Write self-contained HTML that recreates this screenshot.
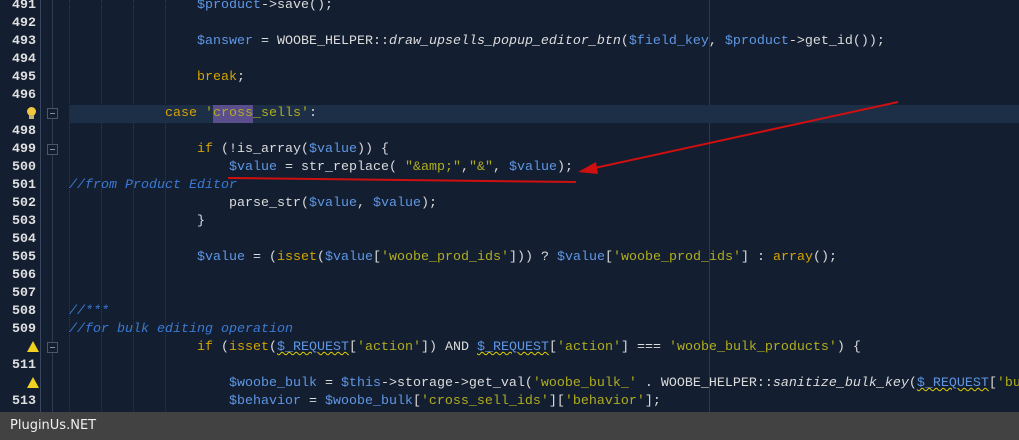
<html><head><style>
body{margin:0;width:1019px;height:440px;background:#131e31;overflow:hidden;position:relative;font-family:"Liberation Mono",monospace;}
.ln{position:absolute;left:0;width:36px;text-align:right;color:#e0e0e0;font-size:13.33px;height:18px;line-height:18px;font-weight:bold}
.cd{position:absolute;left:69px;white-space:pre;color:#dcdcdc;font-size:13.33px;height:18px;line-height:18px;}
.k{color:#d5a400}.v{color:#5f97e4}.s{color:#b0ad1e}.c{color:#3b7ad4;font-style:italic}.i{font-style:italic}
.w{text-decoration:underline wavy #e0d000;text-decoration-thickness:1px}
.g{position:absolute;top:0;height:412px;border-left:1px dotted #2b3a52}
.fb{position:absolute;left:47px;width:9px;height:9px;border:1px solid #4a5670;background:#131e31}
.fb:after{content:"";position:absolute;left:2px;top:4px;width:5px;height:1px;background:#8090a8}
</style></head><body>
<div style="position:absolute;left:40px;top:0;width:1px;height:412px;background:#3a4660"></div>
<div style="position:absolute;left:52px;top:0;width:1px;height:412px;background:#2e3b52"></div>
<div style="position:absolute;left:709px;top:0;width:1px;height:412px;background:#2a3850"></div>
<div class="g" style="left:69px"></div><div class="g" style="left:101px"></div><div class="g" style="left:133px"></div><div class="g" style="left:165px"></div>
<div style="position:absolute;left:69px;top:105px;width:950px;height:18px;background:#1d2f47"></div>
<div style="position:absolute;left:213px;top:105px;width:40px;height:18px;background:#5a4e8c"></div>
<div class="fb" style="top:108px"></div><div class="fb" style="top:144px"></div><div class="fb" style="top:342px"></div>
<div class="ln" style="top:-3px">491</div><div class="cd" style="top:-3px">                <span class="v">$product</span>-&gt;save();</div>
<div class="ln" style="top:15px">492</div>
<div class="ln" style="top:33px">493</div><div class="cd" style="top:33px">                <span class="v">$answer</span> = WOOBE_HELPER::<span class="i">draw_upsells_popup_editor_btn</span>(<span class="v">$field_key</span>, <span class="v">$product</span>-&gt;get_id());</div>
<div class="ln" style="top:51px">494</div>
<div class="ln" style="top:69px">495</div><div class="cd" style="top:69px">                <span class="k">break</span>;</div>
<div class="ln" style="top:87px">496</div>
<div style="position:absolute;left:27px;top:107px;width:9px;height:9px;border-radius:50%;background:#f0c840"></div><div style="position:absolute;left:29px;top:115px;width:5px;height:4px;background:#c8b070"></div>
<div class="cd" style="top:105px">            <span class="k">case</span> <span class="s">'cross_sells'</span>:</div>
<div class="ln" style="top:123px">498</div>
<div class="ln" style="top:141px">499</div><div class="cd" style="top:141px">                <span class="k">if</span> (!is_array(<span class="v">$value</span>)) {</div>
<div class="ln" style="top:159px">500</div><div class="cd" style="top:159px">                    <span class="v">$value</span> = str_replace( <span class="s">"&amp;amp;"</span>,<span class="s">"&amp;"</span>, <span class="v">$value</span>);</div>
<div class="ln" style="top:177px">501</div><div class="cd" style="top:177px"><span class="c">//from Product Editor</span></div>
<div class="ln" style="top:195px">502</div><div class="cd" style="top:195px">                    parse_str(<span class="v">$value</span>, <span class="v">$value</span>);</div>
<div class="ln" style="top:213px">503</div><div class="cd" style="top:213px">                }</div>
<div class="ln" style="top:231px">504</div>
<div class="ln" style="top:249px">505</div><div class="cd" style="top:249px">                <span class="v">$value</span> = (<span class="k">isset</span>(<span class="v">$value</span>[<span class="s">'woobe_prod_ids'</span>])) ? <span class="v">$value</span>[<span class="s">'woobe_prod_ids'</span>] : <span class="k">array</span>();</div>
<div class="ln" style="top:267px">506</div>
<div class="ln" style="top:285px">507</div>
<div class="ln" style="top:303px">508</div><div class="cd" style="top:303px"><span class="c">//***</span></div>
<div class="ln" style="top:321px">509</div><div class="cd" style="top:321px"><span class="c">//for bulk editing operation</span></div>
<div style="position:absolute;left:27px;top:341px;width:0;height:0;border-left:6px solid transparent;border-right:6px solid transparent;border-bottom:11px solid #f0d020"></div><div class="cd" style="top:339px">                <span class="k">if</span> (<span class="k">isset</span>(<span class="v w">$_REQUEST</span>[<span class="s">'action'</span>]) AND <span class="v w">$_REQUEST</span>[<span class="s">'action'</span>] === <span class="s">'woobe_bulk_products'</span>) {</div>
<div class="ln" style="top:357px">511</div>
<div style="position:absolute;left:27px;top:377px;width:0;height:0;border-left:6px solid transparent;border-right:6px solid transparent;border-bottom:11px solid #f0d020"></div><div class="cd" style="top:375px">                    <span class="v">$woobe_bulk</span> = <span class="v">$this</span>-&gt;storage-&gt;get_val(<span class="s">'woobe_bulk_'</span> . WOOBE_HELPER::<span class="i">sanitize_bulk_key</span>(<span class="v w">$_REQUEST</span>[<span class="s">'bu</span></div>
<div class="ln" style="top:393px">513</div><div class="cd" style="top:393px">                    <span class="v">$behavior</span> = <span class="v">$woobe_bulk</span>[<span class="s">'cross_sell_ids'</span>][<span class="s">'behavior'</span>];</div>
<svg style="position:absolute;left:0;top:0" width="1019" height="440"><g stroke="#d01010" stroke-width="2" fill="none"><line x1="228" y1="178" x2="576" y2="182"/><line x1="898" y1="102" x2="590" y2="169"/></g><polygon points="578,172 596,162 598,174" fill="#d01010"/></svg>
<div style="position:absolute;left:0;top:412px;width:1019px;height:28px;background:#424242;color:#f0f0f0;font-family:'DejaVu Sans',sans-serif;font-size:13px;line-height:28px;padding-left:10px">PluginUs.NET</div>
</body></html>
